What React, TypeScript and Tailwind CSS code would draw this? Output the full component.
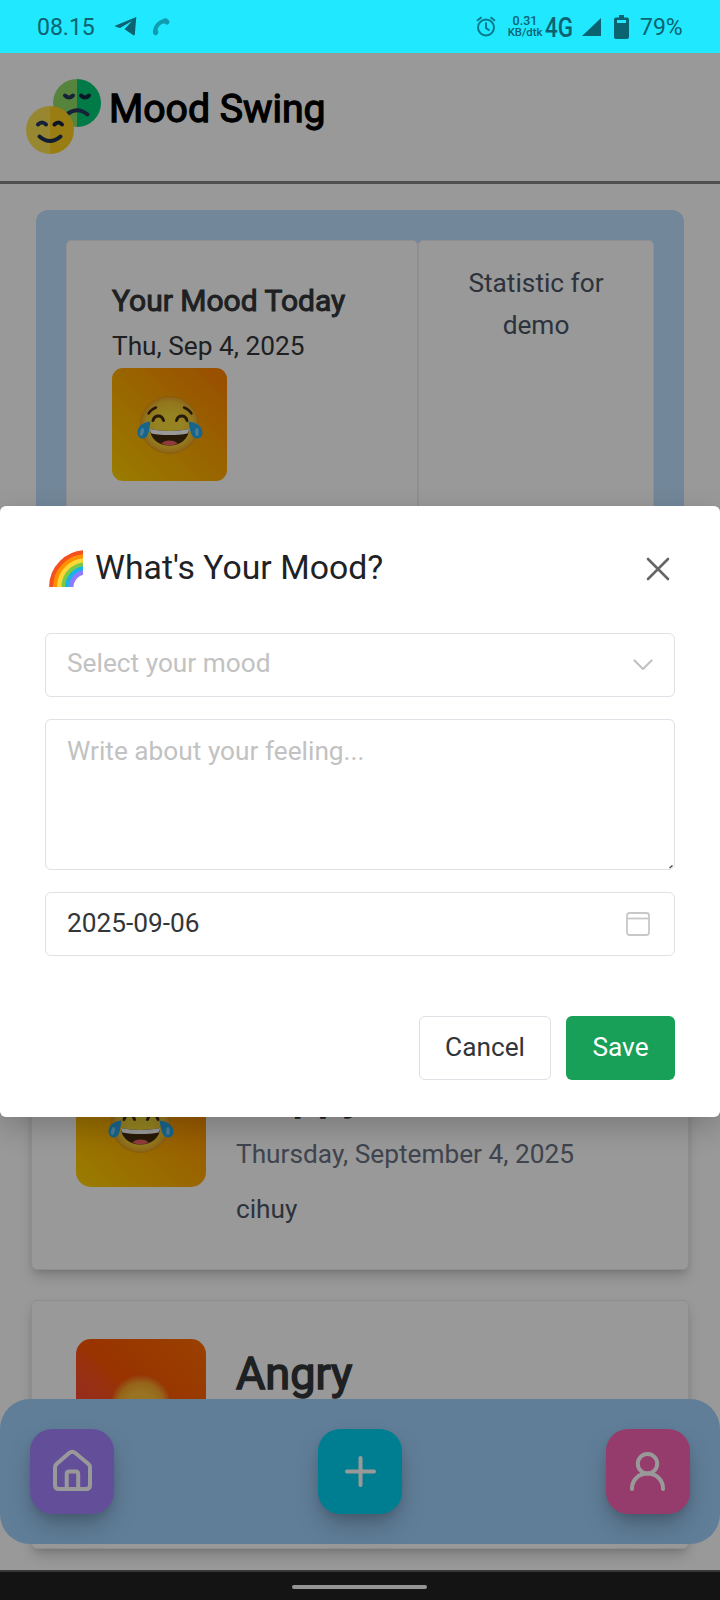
import type { ReactNode } from "react";

function JoyFace() {
  return (
    <svg width="66" height="60" viewBox="0 0 66 60" fill="none">
      <defs>
        <radialGradient id="joy" cx="0.5" cy="0.5" r="0.5">
          <stop offset="0.4" stopColor="#f8dc38" />
          <stop offset="0.8" stopColor="#f5c632" />
          <stop offset="0.95" stopColor="#eeaa28" />
          <stop offset="1" stopColor="#dd8f1a" />
        </radialGradient>
      </defs>
      <ellipse cx="32.5" cy="30" rx="29.5" ry="28.8" fill="url(#joy)" />
      <path d="M11.5 18.500C13.5 15.500 16 13.500 19 12.500" stroke="#422b0d" strokeWidth="2.4" strokeLinecap="round" />
      <path d="M47 12.500C50 13.500 52.5 15.500 54.5 18.500" stroke="#422b0d" strokeWidth="2.4" strokeLinecap="round" />
      <path d="M16 25.5C17.5 19.5 25 19.5 26.5 25.5" stroke="#422b0d" strokeWidth="3" strokeLinecap="round" />
      <path d="M39.5 25.5C41 19.5 48.5 19.5 50 25.5" stroke="#422b0d" strokeWidth="3" strokeLinecap="round" />
      <path d="M13 34C25 36.500 40 36.500 52 34C52 43 44 50.500 32.500 50.500C21 50.500 13 43 13 34Z" fill="#422b0d" />
      <path d="M13 34C25 36.500 40 36.500 52 34C51.800 36.500 51 38 50.500 38.500C40 40.500 25 40.500 14.500 38.500C14 38 13.200 36.500 13 34Z" fill="#fff" />
      <path d="M24.500 48.500C27 44.500 38 44.500 40.500 48.500C35.500 51 29.500 51 24.500 48.500Z" fill="#ef6363" />
      <path d="M13.500 26.500C5 27.500 0.500 32 0.500 37.500C0.500 41 2.500 43.500 6 43.500C12 43.500 12 35 13.500 26.500Z" fill="#29a9ea" />
      <path d="M51.500 26.500C60 27.500 65.500 32 65.500 37.500C65.500 41 63.500 43.500 60 43.500C54 43.500 53 35 51.500 26.500Z" fill="#29a9ea" />
      <ellipse cx="5" cy="37" rx="1.800" ry="4" transform="rotate(15 5 37)" fill="#7bcdf5" />
      <ellipse cx="60" cy="37" rx="1.800" ry="4" fill="#7bcdf5" />
    </svg>
  );
}

function AngryFace() {
  return (
    <svg width="60" height="60" viewBox="0 0 60 60" fill="none">
      <defs>
        <radialGradient id="mad" cx="0.5" cy="0.55" r="0.55">
          <stop offset="0.4" stopColor="#fdc23a" />
          <stop offset="0.72" stopColor="#fba82c" />
          <stop offset="1" stopColor="#f95508" />
        </radialGradient>
      </defs>
      <circle cx="30" cy="30" r="29" fill="url(#mad)" />
      <path d="M15 28L24 33M45 28L36 33" stroke="#422b0d" strokeWidth="2.500" strokeLinecap="round" />
    </svg>
  );
}

function Logo() {
  return (
    <svg width="76" height="76" viewBox="0 0 76 76" fill="none">
      <path d="M51 0A24 24 0 0 0 51 48Z" fill="#92dc67" />
      <path d="M51 0A24 24 0 0 1 51 48Z" fill="#00cc76" />
      <g stroke="#263a5e" strokeWidth="4" strokeLinecap="round">
        <path d="M39 16.500Q43 20.500 47 16.500" />
        <path d="M55 16.500Q59 20.500 63 16.500" stroke="#13243f" />
        <path d="M42 34.500Q52 27.500 61.500 35.500" />
      </g>
      <path d="M24 27A24 24 0 0 0 24 75Z" fill="#fee253" />
      <path d="M24 27A24 24 0 0 1 24 75Z" fill="#ffd020" />
      <g strokeWidth="4" strokeLinecap="round">
        <path d="M12 45.500Q16 41.500 20 45.500" stroke="#263a5e" />
        <path d="M28.500 45.500Q32.500 41.500 36 45.500" stroke="#13243f" />
        <path d="M13.500 57.500Q24 66.500 34.500 57.500" stroke="#1d3052" />
      </g>
    </svg>
  );
}

function Rainbow() {
  const bands = [
    { r: 34.6, c: "#f4511e" },
    { r: 30.6, c: "#ff9100" },
    { r: 26.6, c: "#fdd835" },
    { r: 22.4, c: "#7cc943" },
    { r: 18.6, c: "#18b4e8" },
    { r: 14.8, c: "#8c7bff" },
  ];
  return (
    <svg width="34" height="38" viewBox="0 0 34 38" fill="none">
      {bands.map((b) => (
        <circle key={b.r} cx="37" cy="38" r={b.r} stroke={b.c} strokeWidth="4.600" />
      ))}
    </svg>
  );
}

function StatusBar() {
  return (
    <div className="flex h-[53px] shrink-0 items-center bg-[#1fe8ff] px-[37px] text-[23px] text-[#0b6270]">
      <span className="w-[58px] pt-[3px]">08.15</span>
      <svg className="ml-[20px]" width="22" height="19" viewBox="0 0 22 19" fill="#0b6270">
        <path d="M21.300 0L0 8.700L0.500 9.700L5 11L17 4L9.500 12.300L18.800 18.500L19.800 17.800Z" />
      </svg>
      <svg className="ml-[15px]" width="18" height="18" viewBox="0 0 18 18" fill="none">
        <path d="M14 3.300C8.500 2.500 2.800 8 3.200 14" stroke="#109cae" strokeWidth="4" />
        <path d="M10.500 1.500Q13 -0.500 15 0.500L17 2.500Q18 4.500 16.500 6Q15 7.500 13.500 6L11 4.500ZM1 12Q3.500 10.500 5.500 12.500Q7 13.500 6 15.500Q4.500 18 3 17.500L1 15.500Z" fill="#109cae" />
      </svg>
      <div className="flex-1" />
      <svg width="20" height="21" viewBox="0 0 20 21" fill="none" stroke="#08798a" strokeWidth="2">
        <circle cx="10" cy="11.500" r="8" />
        <path d="M10 6.500V12L13.500 14.500M1 4.800L5.500 1.200M19 4.800L14.500 1.200" />
      </svg>
      <div className="ml-[12px] flex w-[34px] flex-col items-center leading-[11.500px] font-medium">
        <span className="text-[12.500px]">0.31</span>
        <span className="text-[11.300px]">KB/dtk</span>
      </div>
      <span className="ml-[3px] w-[28px] origin-left scale-x-[0.83] pt-[2px] text-[27px] leading-[32px] font-medium">4G</span>
      <svg className="ml-[9px]" width="19" height="18" viewBox="0 0 19 18" fill="#0b6270">
        <path d="M19 0V18H0Z" />
      </svg>
      <svg className="ml-[13px]" width="15" height="24" viewBox="0 0 15 24" fill="#0b6270">
        <path d="M5 0H10V2.500H13Q15 2.500 15 4.500V22Q15 24 13 24H2Q0 24 0 22V4.500Q0 2.500 2 2.500H5Z" />
        <path d="M3 5H12V8H3Z" fill="#1fe8ff" />
      </svg>
      <span className="ml-[11px] w-[43px] pt-[3px]">79%</span>
    </div>
  );
}

type MoodEntryProps = {
  title: string;
  titleClass?: string;
  date: string;
  note: string;
  tile: string;
  face: ReactNode;
};

function MoodEntry({ title, titleClass = "", date, note, tile, face }: MoodEntryProps) {
  return (
    <article className="flex h-[249px] gap-[30px] rounded-[6px] border border-[#ededf0] bg-white pt-[38px] pl-[44px] shadow-[0_8px_14px_-2px_rgba(0,0,0,0.18),0_3px_6px_-2px_rgba(0,0,0,0.12)]">
      <div className={`flex h-[127px] w-[130px] items-center justify-center rounded-[15px] ${tile}`}>{face}</div>
      <div className="flex flex-col pt-[2px]">
        <h2 className={`text-[45px] leading-[66px] text-[#333639] [-webkit-text-stroke:1.500px_#333639] ${titleClass}`}>{title}</h2>
        <p className="mt-[5px] text-[26.250px] leading-[42px] text-[#6a7282]">{date}</p>
        <p className="mt-[13px] text-[26.250px] leading-[42px] text-[#4a5565]">{note}</p>
      </div>
    </article>
  );
}

function NavButton({ color, children }: { color: string; children: ReactNode }) {
  return (
    <button className={`h-[85px] w-[84px] rounded-[22px] shadow-[0_14px_26px_-4px_rgba(0,0,0,0.25),0_4px_12px_-3px_rgba(0,0,0,0.15)] ${color}`}>
      <svg width="84" height="85" viewBox="0 0 84 85" fill="none" stroke="#fff" strokeWidth="4" strokeLinecap="round" strokeLinejoin="round">
        {children}
      </svg>
    </button>
  );
}

function BottomNav() {
  return (
    <nav className="absolute inset-x-0 bottom-[26px] flex h-[145px] justify-between rounded-[30px] bg-[#a1d2fd] px-[30px] pt-[30px]">
      <NavButton color="bg-[#a684ff]">
        <path d="M25 38.500Q25 36.500 26.500 35L39.500 23.800Q42.300 21.600 45 23.800L58.500 35Q60 36.500 60 38.500V56Q60 60 56 60H29Q25 60 25 56Z" />
        <path d="M36.700 60V45Q36.700 42.500 39.200 42.500H45.700Q48.200 42.500 48.200 45V60" />
      </NavButton>
      <NavButton color="bg-[#00d3f2]">
        <path d="M42.500 29V56M29 42.500H56" />
      </NavButton>
      <NavButton color="bg-[#fb64b6]">
        <circle cx="41.500" cy="34.700" r="9.700" />
        <path d="M26 60V59.500C26 50.500 33 44.600 41.500 44.600S57 50.500 57 59.500V60" />
      </NavButton>
    </nav>
  );
}

function MoodModal() {
  return (
    <div className="h-[611px] w-full rounded-[6px] bg-white px-[45px] pt-[35px] text-[26.250px] text-[#333639] shadow-[0_10px_30px_rgba(0,0,0,0.2)]">
      <div className="flex h-[56px] items-center">
        <span className="mt-[-3px] ml-[4px]">
          <Rainbow />
        </span>
        <h2 className="-mt-[2px] ml-[12px] flex-1 text-[33.750px] leading-[54px] text-[#1f2225]">What's Your Mood?</h2>
        <svg className="mr-[5px]" width="24" height="24" viewBox="0 0 24 24" fill="none" stroke="#666" strokeWidth="2.600" strokeLinecap="round">
          <path d="M2 2L22 22M22 2L2 22" />
        </svg>
      </div>
      <div className="mt-[36px] flex h-[64px] items-center justify-between rounded-[6px] border border-[#e0e0e6] pr-[21px] pl-[21px]">
        <span className="-mt-[2px] text-[#c2c2c2]">Select your mood</span>
        <svg width="20" height="12" viewBox="0 0 20 12" fill="none" stroke="#c2c2c2" strokeWidth="2.200" strokeLinecap="round" strokeLinejoin="round">
          <path d="M1.500 1.500L10 10L18.500 1.500" />
        </svg>
      </div>
      <div className="relative mt-[22px] h-[151px] rounded-[6px] border border-[#e0e0e6] px-[21px] pt-[10px] leading-[42px] text-[#c2c2c2]">
        Write about your feeling...
        <svg className="absolute right-[1px] bottom-0" width="4" height="4" viewBox="0 0 4 4" stroke="#444" strokeWidth="1.300">
          <path d="M0.500 3L3.500 0.500" />
        </svg>
      </div>
      <div className="mt-[22px] flex h-[64px] items-center justify-between rounded-[6px] border border-[#e0e0e6] pr-[24px] pl-[21px]">
        <span className="-mt-px">2025-09-06</span>
        <svg width="24" height="24" viewBox="0 0 24 24" fill="none" stroke="#c8c8c8" strokeWidth="1.800">
          <rect x="1" y="1" width="22" height="22" rx="2.500" />
          <path d="M1 6.500H23" />
        </svg>
      </div>
      <div className="mt-[60px] flex justify-end gap-[15px]">
        <button className="h-[64px] w-[132px] rounded-[6px] border border-[#e0e0e6] pb-px">Cancel</button>
        <button className="h-[64px] w-[109px] rounded-[6px] bg-[#18a058] pb-px text-white">Save</button>
      </div>
    </div>
  );
}

export default function App() {
  return (
    <div className="flex h-[1600px] w-[720px] flex-col overflow-hidden bg-white font-[Roboto,sans-serif]">
      <StatusBar />
      <div className="relative h-[1517px] shrink-0 overflow-hidden">
        <header className="flex h-[131px] border-b-[3px] border-[#858585] pt-[26px] pl-[26px]">
          <Logo />
          <h1 className="ml-[7px] text-[39.200px] leading-[60px] text-black [-webkit-text-stroke:1.300px_black]">Mood Swing</h1>
        </header>
        <section className="mx-[36px] mt-[26px] flex h-[560px] rounded-[12px] bg-[#bee1ff] p-[30px]">
          <div className="w-[352px] rounded-[5px] border border-[#efeff5] bg-white pt-[36px] pl-[45px]">
            <h2 className="text-[30px] leading-[48px] text-[#333639] [-webkit-text-stroke:1px_#333639]">Your Mood Today</h2>
            <p className="text-[26.250px] leading-[42px] text-[#333639]">Thu, Sep 4, 2025</p>
            <div className="mt-[1px] flex h-[113px] w-[115px] items-center justify-center rounded-[11px] bg-linear-to-tr from-[#ffd000] to-[#ff8000]">
              <JoyFace />
            </div>
          </div>
          <div className="w-[236px] rounded-[5px] border border-[#efeff5] bg-white px-[44px] pt-[21px] text-center text-[26.250px] leading-[42px] text-[#4a5565]">
            Statistic for demo
          </div>
        </section>
        <section className="mx-[31px] mt-[251px] flex flex-col gap-[30px]">
          <MoodEntry
            title="Happy"
            titleClass="-mt-px mb-px"
            date="Thursday, September 4, 2025"
            note="cihuy"
            tile="bg-linear-to-tr from-[#ffd000] to-[#ff8000]"
            face={<JoyFace />}
          />
          <MoodEntry title="Angry" date="" note="" tile="bg-linear-to-tr from-[#f53a48] via-[#ff5500] to-[#ff6c00]" face={<AngryFace />} />
        </section>
        <BottomNav />
        <div className="absolute inset-0 flex items-center bg-black/40">
          <MoodModal />
        </div>
      </div>
      <div className="flex flex-1 items-center justify-center border-t-2 border-[#383838] bg-[#141414]">
        <div className="mt-[2px] mr-px h-[4px] w-[135px] rounded-full bg-[#949494]" />
      </div>
    </div>
  );
}
